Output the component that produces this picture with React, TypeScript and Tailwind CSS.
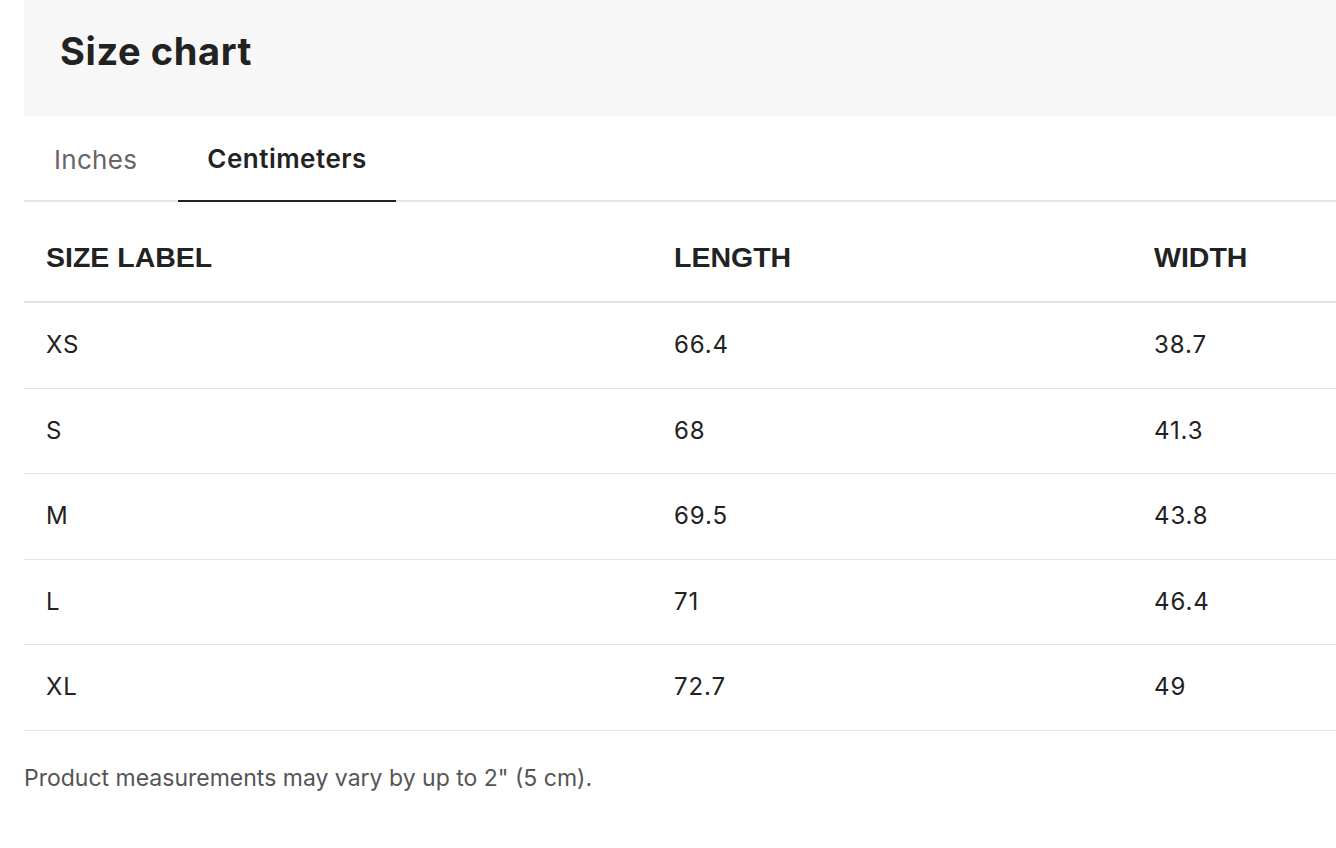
const rows = [
  { size: "XS", length: "66.4", width: "38.7" },
  { size: "S", length: "68", width: "41.3" },
  { size: "M", length: "69.5", width: "43.8" },
  { size: "L", length: "71", width: "46.4" },
  { size: "XL", length: "72.7", width: "49" },
];

export default function App() {
  return (
    <div className="min-h-[848px] bg-white pl-6 font-['Inter',sans-serif] text-[#222]">
      <div className="h-[116px] bg-[#f7f7f7] pl-9 pt-[31px]">
        <h1 className="text-[38px] font-bold leading-[40px] tracking-[0.6px]">Size chart</h1>
      </div>

      <div className="flex gap-[11px] border-b-2 border-[#e6e6e6]">
        <button className="-mb-[2px] h-[86px] px-[30px] text-[26px] tracking-[0.3px] text-[#666]">Inches</button>
        <button className="-mb-[2px] h-[86px] border-b-2 border-[#222] px-[29px] text-[26px] font-semibold tracking-[0.5px]">
          Centimeters
        </button>
      </div>

      <div>
        <div className="grid h-[101px] grid-cols-[628px_480px_1fr] items-center border-b-2 border-[#e3e3e3] pl-[22px] pt-3 font-['Liberation_Sans',Arial,sans-serif] text-[28.5px] font-bold uppercase">
          <div>Size label</div>
          <div>Length</div>
          <div>Width</div>
        </div>
        {rows.map((r) => (
          <div
            key={r.size}
            className="grid h-[85.5px] grid-cols-[628px_480px_1fr] items-center border-b border-[#e6e6e6] pl-[22px] text-[24px] tracking-[0.9px]"
          >
            <div>{r.size}</div>
            <div>{r.length}</div>
            <div>{r.width}</div>
          </div>
        ))}
      </div>

      <p className="mt-[30px] text-[23px] text-[#555]">Product measurements may vary by up to 2" (5 cm).</p>
    </div>
  );
}
